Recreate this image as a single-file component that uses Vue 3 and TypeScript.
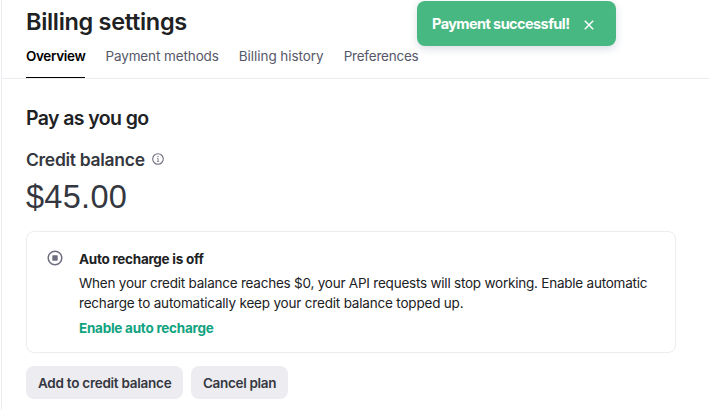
<script setup lang="ts">
import { ref } from 'vue'

interface Tab {
  id: string
  label: string
}

const tabs: Tab[] = [
  { id: 'overview', label: 'Overview' },
  { id: 'methods', label: 'Payment methods' },
  { id: 'history', label: 'Billing history' },
  { id: 'preferences', label: 'Preferences' },
]

const activeTab = ref('overview')
const toastOpen = ref(true)
</script>

<template>
  <div class="page">
    <header class="header">
      <h1 class="title">Billing settings</h1>
      <nav class="tabs">
        <a
          v-for="tab in tabs"
          :key="tab.id"
          :class="['tab', tab.id, { active: tab.id === activeTab }]"
          @click="activeTab = tab.id"
        >{{ tab.label }}</a>
      </nav>
    </header>

    <main class="content">
      <h2 class="section-title">Pay as you go</h2>

      <div class="balance-label">
        <span class="label-text">Credit balance</span>
        <svg class="info" viewBox="0 0 12 12" fill="none">
          <circle cx="6" cy="6" r="5.3" stroke="currentColor" stroke-width="1.1" />
          <path d="M5 5.4H6.1V8.4M4.9 8.4H7.2" stroke="currentColor" stroke-width="0.8" />
          <circle cx="6" cy="3.6" r="0.7" fill="currentColor" />
        </svg>
      </div>
      <div class="balance">$45.00</div>

      <section class="card">
        <svg class="status" viewBox="0 0 16 16" fill="none">
          <circle cx="8" cy="8" r="6.8" stroke="currentColor" stroke-width="1.5" />
          <rect x="5.3" y="5.3" width="5.4" height="5.4" rx="0.6" fill="currentColor" />
        </svg>
        <div class="card-body">
          <div class="card-title">Auto recharge is off</div>
          <p class="card-text">
            <span class="line">When your credit balance reaches $0, your API requests will stop working. Enable automatic</span>
            <span class="line">recharge to automatically keep your credit balance topped up.</span>
          </p>
          <a class="card-link">Enable auto recharge</a>
        </div>
      </section>

      <div class="actions">
        <button class="btn add" type="button">Add to credit balance</button>
        <button class="btn cancel" type="button">Cancel plan</button>
      </div>
    </main>

    <div v-if="toastOpen" class="toast" role="status">
      <span class="toast-text">Payment successful!</span>
      <svg class="close" viewBox="0 0 10 10" fill="none" @click="toastOpen = false">
        <path d="M0.8 0.8L9.2 9.2M9.2 0.8L0.8 9.2" stroke="currentColor" stroke-width="1.5" />
      </svg>
    </div>
  </div>
</template>

<style>
body {
  background: #fff;
  overflow: hidden;
}
</style>

<style scoped>
.page {
  box-sizing: border-box;
  position: relative;
  height: 410px;
  margin-left: 1px;
  border-left: 1px solid #ececf1;
  font-family: Inter, 'Liberation Sans', sans-serif;
  font-size: 13.5px;
  line-height: 20px;
  color: #202123;
}

.header {
  padding: 6px 24px 0;
  border-bottom: 1px solid #ececf1;
}

.title {
  margin: 0;
  font-size: 23.5px;
  font-weight: 600;
  line-height: 32px;
  letter-spacing: -0.31px;
}

.tabs {
  display: flex;
  gap: 20px;
  padding-top: 8px;
}

.tab {
  padding-bottom: 11px;
  border-bottom: 1px solid transparent;
  color: #565869;
  white-space: nowrap;
  cursor: pointer;
}

.tab.active {
  border-bottom-color: #000;
  color: #000;
  font-weight: 600;
}

.tab.overview {
  letter-spacing: -0.35px;
}

.tab.methods {
  letter-spacing: -0.11px;
}

.tab.history {
  letter-spacing: -0.05px;
}

.tab.preferences {
  letter-spacing: -0.22px;
}

.content {
  padding: 25px 33px 0 24px;
}

.section-title {
  margin: 0;
  font-size: 19.5px;
  font-weight: 600;
  line-height: 28px;
  letter-spacing: -0.6px;
}

.balance-label {
  display: flex;
  align-items: center;
  gap: 7.5px;
  height: 24px;
  margin-top: 15px;
  font-size: 17.5px;
  font-weight: 600;
  line-height: 24px;
  letter-spacing: -0.3px;
  color: #353740;
}

.label-text {
  padding-top: 2px;
}

.info {
  width: 12px;
  height: 12px;
  color: #6e6e80;
}

.balance {
  margin-top: 6px;
  font-family: 'Liberation Sans', Arial, sans-serif;
  font-size: 32.5px;
  line-height: 40px;
  letter-spacing: 0.3px;
  color: #353740;
}

.card {
  display: flex;
  gap: 16px;
  margin-top: 14px;
  padding: 15px 20px 14px;
  border: 1px solid #ececf1;
  border-radius: 8px;
}

.status {
  flex: none;
  width: 16px;
  height: 16px;
  margin-top: 3px;
  color: #6e6e80;
}

.card-title {
  font-weight: 700;
  line-height: 24px;
  letter-spacing: -0.27px;
}

.card-text {
  margin: 2px 0 5px;
}

.line {
  display: block;
  letter-spacing: -0.225px;
  white-space: nowrap;
}

.line + .line {
  letter-spacing: -0.19px;
}

.card-link {
  display: block;
  font-weight: 700;
  letter-spacing: -0.25px;
  color: #10a37f;
}

.actions {
  display: flex;
  gap: 8px;
  margin-top: 13px;
}

.btn {
  height: 33px;
  padding: 0 0 0 12px;
  border: 0;
  border-radius: 8px;
  background: #ececf1;
  color: #353740;
  font-family: inherit;
  font-size: 13.5px;
  font-weight: 600;
  line-height: 34px;
  letter-spacing: -0.26px;
  text-align: left;
  white-space: nowrap;
}

.add {
  width: 157px;
}

.cancel {
  width: 97px;
  letter-spacing: -0.33px;
}

.toast {
  position: absolute;
  top: 1px;
  left: 415px;
  display: flex;
  align-items: center;
  gap: 15px;
  box-sizing: border-box;
  width: 199px;
  height: 45px;
  padding: 0 15px;
  border-radius: 8px;
  background: #47b881;
  box-shadow: 0 3px 8px rgba(45, 65, 100, 0.18);
  color: #fff;
}

.toast-text {
  font-size: 14.5px;
  font-weight: 700;
  letter-spacing: -0.58px;
  white-space: nowrap;
}

.close {
  width: 10px;
  height: 10px;
  margin-top: 3px;
  cursor: pointer;
}
</style>
